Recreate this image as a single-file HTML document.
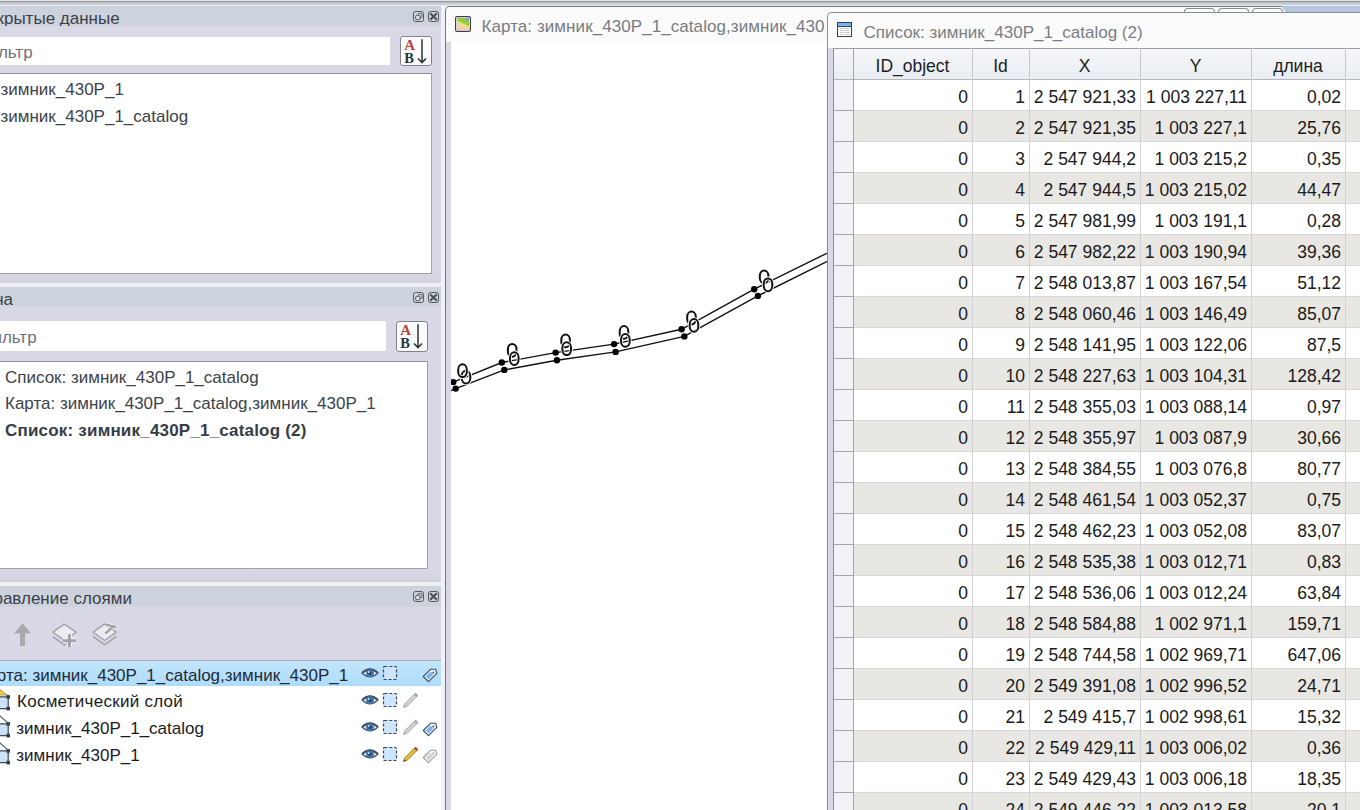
<!DOCTYPE html>
<html><head><meta charset="utf-8"><style>
html,body{margin:0;padding:0}
body{width:1360px;height:810px;overflow:hidden;position:relative;background:#fff;font-family:"Liberation Sans",sans-serif}
.a{position:absolute;box-sizing:border-box}
.t{position:absolute;white-space:pre;line-height:1;font-family:"Liberation Sans",sans-serif}
svg.a{overflow:visible}
</style></head><body>
<div class="a" style="left:0px;top:0px;width:1360px;height:7px;background:linear-gradient(#e2e4e8 0px,#e2e4e8 1px,#8e9298 1px,#9a9ea4 2px,#b6bac0 2px,#d4d8de 5px,#e4e7ec 5px,#e4e7ec 7px)"></div>
<div class="a" style="left:0px;top:6px;width:441px;height:20px;background:linear-gradient(#cdd3dc 0,#cdd3dc 18px,#d3d5e0 20px)"></div>
<div class="t" style="left:-24.5px;top:9.61px;font-size:17px;color:#3b4049;font-weight:400;">Открытые данные</div>
<svg class="a" style="left:413px;top:11px" width="11" height="11" viewBox="0 0 11 11"><rect x="0.5" y="0.5" width="10" height="10" rx="2" fill="none" stroke="#55595f"/><rect x="5.3" y="2.4" width="3.6" height="4.2" rx="1" fill="none" stroke="#55595f" stroke-width="1"/><rect x="2.6" y="4.3" width="4.4" height="4.4" rx="1.3" fill="#d6dbe2" stroke="#55595f" stroke-width="1"/></svg>
<svg class="a" style="left:428px;top:11px" width="11" height="11" viewBox="0 0 11 11"><rect x="0.5" y="0.5" width="10" height="10" rx="2" fill="none" stroke="#55595f"/><path d="M2.9 2.9 L8.1 8.1 M8.1 2.9 L2.9 8.1" stroke="#4e5258" stroke-width="2.1" stroke-linecap="square"/></svg>
<div class="a" style="left:0px;top:26px;width:441px;height:257px;background:linear-gradient(#d9d8e6 0,#d9d8e6 245px,#d4d4e1 257px)"></div>
<div class="a" style="left:0px;top:37px;width:390px;height:28px;background:#fff"></div>
<div class="t" style="left:-24.5px;top:44.41px;font-size:17px;color:#6f7378;font-weight:400;">Фильтр</div>
<svg class="a" style="left:400px;top:36px" width="32" height="30" viewBox="0 0 32 30"><rect x="0.5" y="0.5" width="31" height="29" rx="2.5" fill="#fbfbfd" stroke="#7f838a"/><text x="4.2" y="14" font-family="Liberation Serif" font-weight="700" font-size="15" fill="#b8443a">A</text><text x="4.2" y="26.6" font-family="Liberation Serif" font-weight="700" font-size="14.5" fill="#1f3838">B</text><path d="M22 3.3 V26.5 M18 22.5 L22 26.6 L26 22.5" fill="none" stroke="#2a3236" stroke-width="1.5"/></svg>
<div class="a" style="left:-2px;top:73px;width:434px;height:201px;background:#fff;border-top:1px solid #8d9096;border-right:1px solid #a0a3aa;border-bottom:1px solid #a0a3aa"></div>
<div class="t" style="left:0.5px;top:80.61px;font-size:17px;color:#3c424b;font-weight:400;">зимник_430P_1</div>
<div class="t" style="left:0.5px;top:108.11px;font-size:17px;color:#3c424b;font-weight:400;">зимник_430P_1_catalog</div>
<div class="a" style="left:0px;top:283px;width:441px;height:4px;background:#eef0f6"></div>
<div class="a" style="left:0px;top:287px;width:441px;height:20px;background:linear-gradient(#cdd3dc 0,#cdd3dc 18px,#d3d5e0 20px)"></div>
<div class="t" style="left:-26.5px;top:290.61px;font-size:17px;color:#3b4049;font-weight:400;">Окна</div>
<svg class="a" style="left:413px;top:292px" width="11" height="11" viewBox="0 0 11 11"><rect x="0.5" y="0.5" width="10" height="10" rx="2" fill="none" stroke="#55595f"/><rect x="5.3" y="2.4" width="3.6" height="4.2" rx="1" fill="none" stroke="#55595f" stroke-width="1"/><rect x="2.6" y="4.3" width="4.4" height="4.4" rx="1.3" fill="#d6dbe2" stroke="#55595f" stroke-width="1"/></svg>
<svg class="a" style="left:428px;top:292px" width="11" height="11" viewBox="0 0 11 11"><rect x="0.5" y="0.5" width="10" height="10" rx="2" fill="none" stroke="#55595f"/><path d="M2.9 2.9 L8.1 8.1 M8.1 2.9 L2.9 8.1" stroke="#4e5258" stroke-width="2.1" stroke-linecap="square"/></svg>
<div class="a" style="left:0px;top:307px;width:441px;height:275px;background:linear-gradient(#d9d8e6 0,#d9d8e6 261px,#d3d3e0 275px)"></div>
<div class="a" style="left:0px;top:321px;width:386px;height:29.5px;background:#fff"></div>
<div class="t" style="left:-20.5px;top:329.21px;font-size:17px;color:#6f7378;font-weight:400;">Фильтр</div>
<svg class="a" style="left:396px;top:321px" width="32" height="31" viewBox="0 0 32 31"><rect x="0.5" y="0.5" width="31" height="30" rx="2.5" fill="#fbfbfd" stroke="#7f838a"/><text x="4.2" y="14" font-family="Liberation Serif" font-weight="700" font-size="15" fill="#b8443a">A</text><text x="4.2" y="26.6" font-family="Liberation Serif" font-weight="700" font-size="14.5" fill="#1f3838">B</text><path d="M22 3.3 V26.5 M18 22.5 L22 26.6 L26 22.5" fill="none" stroke="#2a3236" stroke-width="1.5"/></svg>
<div class="a" style="left:-2px;top:361px;width:430px;height:208px;background:#fff;border-top:1px solid #8d9096;border-right:1px solid #a0a3aa;border-bottom:1px solid #a0a3aa"></div>
<div class="t" style="left:5px;top:368.61px;font-size:17px;color:#3c424b;font-weight:400;">Список: зимник_430P_1_catalog</div>
<div class="t" style="left:5px;top:395.11px;font-size:17px;color:#3c424b;font-weight:400;">Карта: зимник_430P_1_catalog,зимник_430P_1</div>
<div class="t" style="left:5px;top:422.11px;font-size:17px;color:#363c45;font-weight:700;letter-spacing:0.2px">Список: зимник_430P_1_catalog (2)</div>
<div class="a" style="left:0px;top:582px;width:441px;height:4px;background:#eef0f6"></div>
<div class="a" style="left:0px;top:586px;width:441px;height:21px;background:linear-gradient(#cdd3dc 0,#cdd3dc 19px,#d3d5e0 21px)"></div>
<div class="t" style="left:-25.8px;top:589.61px;font-size:17px;color:#3b4049;font-weight:400;">Управление слоями</div>
<svg class="a" style="left:413px;top:591px" width="11" height="11" viewBox="0 0 11 11"><rect x="0.5" y="0.5" width="10" height="10" rx="2" fill="none" stroke="#55595f"/><rect x="5.3" y="2.4" width="3.6" height="4.2" rx="1" fill="none" stroke="#55595f" stroke-width="1"/><rect x="2.6" y="4.3" width="4.4" height="4.4" rx="1.3" fill="#d6dbe2" stroke="#55595f" stroke-width="1"/></svg>
<svg class="a" style="left:428px;top:591px" width="11" height="11" viewBox="0 0 11 11"><rect x="0.5" y="0.5" width="10" height="10" rx="2" fill="none" stroke="#55595f"/><path d="M2.9 2.9 L8.1 8.1 M8.1 2.9 L2.9 8.1" stroke="#4e5258" stroke-width="2.1" stroke-linecap="square"/></svg>
<div class="a" style="left:0px;top:607px;width:441px;height:53px;background:#d9d8e6"></div>
<svg class="a" style="left:10px;top:618px" width="120" height="34" viewBox="0 0 120 34"><path d="M12.5 5.3 L4 15.5 L10 15.5 L10 28 L15 28 L15 15.5 L21 15.5 Z" fill="#a9a9b1"/><path d="M54.3 6.1 L66.3 14.2 L54.5 22.5 L42.8 14.2 Z" fill="#ececf0" stroke="#a2a2aa" stroke-width="1.5" stroke-linejoin="round"/><path d="M42.8 18.6 L54.5 27 L58 24.5" fill="none" stroke="#a2a2aa" stroke-width="1.5"/><path d="M59.4 16.2 V29.2 M52.9 22.7 H65.9" stroke="#f4f4f8" stroke-width="5.2"/><path d="M59.4 16.2 V29.2 M52.9 22.7 H65.9" stroke="#a2a2aa" stroke-width="3"/><path d="M94.4 6.1 L106.2 14.2 L94.6 22.5 L83 14.2 Z" fill="#ececf0" stroke="#a2a2aa" stroke-width="1.5" stroke-linejoin="round"/><path d="M83 18.4 L94.6 26.8 L106.6 18.4" fill="none" stroke="#a2a2aa" stroke-width="1.5"/><path d="M95.3 15.5 L104.7 7.4 M96 6.3 L105.8 9.3" stroke="#f4f4f8" stroke-width="4"/><path d="M95.3 15.5 L104.7 7.4 M96 6.3 L105.8 9.3" stroke="#a2a2aa" stroke-width="2.4"/></svg>
<div class="a" style="left:0px;top:660px;width:441px;height:150px;background:#fff;border-top:1px solid #a3a8b2"></div>
<div class="a" style="left:0px;top:661px;width:441px;height:25px;background:linear-gradient(#c2e5fc,#aedcfb)"></div>
<div class="t" style="left:-22.5px;top:666.61px;font-size:17px;color:#1d2a36;font-weight:400;">Карта: зимник_430P_1_catalog,зимник_430P_1</div>
<svg class="a" style="left:360px;top:665px" width="20" height="16" viewBox="0 0 20 16"><path d="M2 8 Q10 0.5 18 8 Q10 15.5 2 8 Z" fill="#eef4fa" stroke="#4b5764" stroke-width="1.3"/><path d="M2.5 7.6 Q10 1.2 17.5 7.6" fill="none" stroke="#46525e" stroke-width="2"/><circle cx="10" cy="8.2" r="3.9" fill="#3f74ae"/><circle cx="10" cy="8.2" r="1.6" fill="#23466e"/><circle cx="8.8" cy="7" r="0.9" fill="#d8e6f4"/></svg>
<svg class="a" style="left:382px;top:665px" width="16" height="16" viewBox="0 0 16 16"><rect x="1.5" y="1.5" width="13" height="13" rx="1" fill="#cfe5fb" stroke="#34495f" stroke-width="1.2" stroke-dasharray="3 1.8"/></svg>
<svg class="a" style="left:421px;top:665px" width="18" height="17" viewBox="0 0 18 17"><path d="M2.3 11.5 L9.5 4.3 L14.7 4.3 L15.8 8.4 L7.5 16.7 Z" fill="#fafcff" stroke="#354a60" stroke-width="1.1" stroke-linejoin="round"/><path d="M4.6 11.4 L9.5 6.5 L12.5 9.5 L7.6 14.4 Z" fill="#7fb4ea"/><circle cx="12.4" cy="7.4" r="1" fill="#354a60"/></svg>
<div class="t" style="left:17px;top:692.61px;font-size:17px;color:#1b1b1b;font-weight:400;letter-spacing:0.27px">Косметический слой</div>
<svg class="a" style="left:360px;top:692px" width="20" height="16" viewBox="0 0 20 16"><path d="M2 8 Q10 0.5 18 8 Q10 15.5 2 8 Z" fill="#eef4fa" stroke="#4b5764" stroke-width="1.3"/><path d="M2.5 7.6 Q10 1.2 17.5 7.6" fill="none" stroke="#46525e" stroke-width="2"/><circle cx="10" cy="8.2" r="3.9" fill="#3f74ae"/><circle cx="10" cy="8.2" r="1.6" fill="#23466e"/><circle cx="8.8" cy="7" r="0.9" fill="#d8e6f4"/></svg>
<svg class="a" style="left:382px;top:692px" width="16" height="16" viewBox="0 0 16 16"><rect x="1.5" y="1.5" width="13" height="13" rx="1" fill="#cfe5fb" stroke="#34495f" stroke-width="1.2" stroke-dasharray="3 1.8"/></svg>
<svg class="a" style="left:402px;top:692px" width="17" height="17" viewBox="0 0 17 17"><path d="M1.5 15.5 L2.8 11.8 L12.3 2.3 L14.7 4.7 L5.2 14.2 Z" fill="#d0d2d6" stroke="#9c9fa4" stroke-width="0.9" stroke-linejoin="round"/><path d="M12.3 2.3 L13.6 1 L16 3.4 L14.7 4.7 Z" fill="#a4a7ac" stroke="#9c9fa4" stroke-width="0.6"/></svg>
<svg class="a" style="left:0px;top:687px" width="12" height="24" viewBox="0 0 12 24"><path d="M-1 1.8 L7.5 8.1 L-1 8.1 Z" fill="#f0c640" stroke="#8a7a40" stroke-width="0.6"/><path d="M-1 9.9 L8.2 9.9 L8.2 21.6 L-1 21.6 Z" fill="#cde2f8" stroke="#3c4956" stroke-width="1.2"/><rect x="6.4" y="8.1" width="3.6" height="3.6" fill="#36414c"/><rect x="6.4" y="19.8" width="3.6" height="3.6" fill="#36414c"/></svg>
<div class="t" style="left:16.3px;top:719.81px;font-size:17px;color:#1b1b1b;font-weight:400;">зимник_430P_1_catalog</div>
<svg class="a" style="left:360px;top:719px" width="20" height="16" viewBox="0 0 20 16"><path d="M2 8 Q10 0.5 18 8 Q10 15.5 2 8 Z" fill="#eef4fa" stroke="#4b5764" stroke-width="1.3"/><path d="M2.5 7.6 Q10 1.2 17.5 7.6" fill="none" stroke="#46525e" stroke-width="2"/><circle cx="10" cy="8.2" r="3.9" fill="#3f74ae"/><circle cx="10" cy="8.2" r="1.6" fill="#23466e"/><circle cx="8.8" cy="7" r="0.9" fill="#d8e6f4"/></svg>
<svg class="a" style="left:382px;top:719px" width="16" height="16" viewBox="0 0 16 16"><rect x="1.5" y="1.5" width="13" height="13" rx="1" fill="#cfe5fb" stroke="#34495f" stroke-width="1.2" stroke-dasharray="3 1.8"/></svg>
<svg class="a" style="left:402px;top:719px" width="17" height="17" viewBox="0 0 17 17"><path d="M1.5 15.5 L2.8 11.8 L12.3 2.3 L14.7 4.7 L5.2 14.2 Z" fill="#d0d2d6" stroke="#9c9fa4" stroke-width="0.9" stroke-linejoin="round"/><path d="M12.3 2.3 L13.6 1 L16 3.4 L14.7 4.7 Z" fill="#a4a7ac" stroke="#9c9fa4" stroke-width="0.6"/></svg>
<svg class="a" style="left:421px;top:719px" width="18" height="17" viewBox="0 0 18 17"><path d="M2.3 11.5 L9.5 4.3 L14.7 4.3 L15.8 8.4 L7.5 16.7 Z" fill="#fafcff" stroke="#354a60" stroke-width="1.1" stroke-linejoin="round"/><path d="M4.6 11.4 L9.5 6.5 L12.5 9.5 L7.6 14.4 Z" fill="#7fb4ea"/><circle cx="12.4" cy="7.4" r="1" fill="#354a60"/></svg>
<svg class="a" style="left:0px;top:714px" width="12" height="24" viewBox="0 0 12 24"><path d="M-1 1.2 L7.5 8.7" fill="none" stroke="#46535f" stroke-width="1.1"/><path d="M-1 9.9 L8.2 9.9 L8.2 21.6 L-1 21.6 Z" fill="#cde2f8" stroke="#3c4956" stroke-width="1.2"/><rect x="6.4" y="8.1" width="3.6" height="3.6" fill="#36414c"/><rect x="6.4" y="19.8" width="3.6" height="3.6" fill="#36414c"/></svg>
<div class="t" style="left:16.3px;top:746.61px;font-size:17px;color:#1b1b1b;font-weight:400;">зимник_430P_1</div>
<svg class="a" style="left:360px;top:746px" width="20" height="16" viewBox="0 0 20 16"><path d="M2 8 Q10 0.5 18 8 Q10 15.5 2 8 Z" fill="#eef4fa" stroke="#4b5764" stroke-width="1.3"/><path d="M2.5 7.6 Q10 1.2 17.5 7.6" fill="none" stroke="#46525e" stroke-width="2"/><circle cx="10" cy="8.2" r="3.9" fill="#3f74ae"/><circle cx="10" cy="8.2" r="1.6" fill="#23466e"/><circle cx="8.8" cy="7" r="0.9" fill="#d8e6f4"/></svg>
<svg class="a" style="left:382px;top:746px" width="16" height="16" viewBox="0 0 16 16"><rect x="1.5" y="1.5" width="13" height="13" rx="1" fill="#cfe5fb" stroke="#34495f" stroke-width="1.2" stroke-dasharray="3 1.8"/></svg>
<svg class="a" style="left:402px;top:746px" width="17" height="17" viewBox="0 0 17 17"><path d="M1.5 15.5 L2.8 11.8 L12.3 2.3 L14.7 4.7 L5.2 14.2 Z" fill="#e8c030" stroke="#8a7420" stroke-width="0.9" stroke-linejoin="round"/><path d="M1.5 15.5 L2.2 13.4 L3.6 14.8 Z" fill="#3a3020"/><path d="M12.3 2.3 L13.6 1 L16 3.4 L14.7 4.7 Z" fill="#b8502c" stroke="#8a3a20" stroke-width="0.6"/></svg>
<svg class="a" style="left:421px;top:746px" width="18" height="17" viewBox="0 0 18 17"><path d="M2.3 11.5 L9.5 4.3 L14.7 4.3 L15.8 8.4 L7.5 16.7 Z" fill="#fafcff" stroke="#9a9da3" stroke-width="1.1" stroke-linejoin="round"/><path d="M4.6 11.4 L9.5 6.5 L12.5 9.5 L7.6 14.4 Z" fill="#cfd1d5"/><circle cx="12.4" cy="7.4" r="1" fill="#9a9da3"/></svg>
<svg class="a" style="left:0px;top:741px" width="12" height="24" viewBox="0 0 12 24"><path d="M-1 1.2 L7.5 8.7" fill="none" stroke="#46535f" stroke-width="1.1"/><path d="M-1 9.9 L8.2 9.9 L8.2 21.6 L-1 21.6 Z" fill="#cde2f8" stroke="#3c4956" stroke-width="1.2"/><rect x="6.4" y="8.1" width="3.6" height="3.6" fill="#36414c"/><rect x="6.4" y="19.8" width="3.6" height="3.6" fill="#36414c"/></svg>
<div class="a" style="left:441px;top:6px;width:4px;height:804px;background:#eff1f7"></div>
<div class="a" style="left:445px;top:6px;width:1000px;height:900px;background:#fbfbfb;border-left:1px solid #73767e;border-top:1px solid #6f7279;border-top-left-radius:5px"></div>
<svg class="a" style="left:455px;top:16px" width="16" height="16" viewBox="0 0 16 16"><rect x="0.6" y="0.6" width="14.8" height="14.8" rx="1.6" fill="#fff" stroke="#3a3f46" stroke-width="1.2"/><rect x="2.2" y="2.2" width="11.6" height="11.6" fill="#f2d4a4"/><path d="M2 9 L7.5 14 L2 14 Z" fill="#f0c4bc"/><path d="M8 14 L14 11 L14 14 Z" fill="#f2c8c4"/><path d="M2 2 L9.5 2 L14 5.5 L14 10.5 L2 4.8 Z" fill="#92c83c"/><path d="M2 5.6 L14 11.2" stroke="#e2ec70" stroke-width="1.6"/><path d="M2 3.2 L12 8.2" stroke="#b8dc50" stroke-width="1"/><path d="M9.5 2 L14 2 L14 5.5 Z" fill="#7c98e4"/></svg>
<div class="a" style="left:470px;top:10px;width:356px;height:30px;overflow:hidden"><div class="t" style="left:11.5px;top:7.61px;font-size:17px;color:#787c82;font-weight:400;letter-spacing:0.07px">Карта: зимник_430P_1_catalog,зимник_430P_1</div></div>
<div class="a" style="left:446px;top:42px;width:5px;height:768px;background:#d8d8e5"></div>
<div class="a" style="left:451px;top:42px;width:900px;height:768px;background:#fff"></div>
<div class="a" style="left:1184px;top:8px;width:31px;height:6px;background:#fdfdfd;border:1px solid #8a8d94;border-bottom:none;border-radius:4px 4px 0 0"></div>
<div class="a" style="left:1218px;top:8px;width:31px;height:6px;background:#fdfdfd;border:1px solid #8a8d94;border-bottom:none;border-radius:4px 4px 0 0"></div>
<div class="a" style="left:1252px;top:8px;width:31px;height:6px;background:#fdfdfd;border:1px solid #8a8d94;border-bottom:none;border-radius:4px 4px 0 0"></div>
<div class="a" style="left:1281px;top:6px;width:79px;height:6.5px;background:#b6c6de;clip-path:polygon(0 0,100% 0,100% 100%,5px 100%)"></div>
<svg class="a" style="left:0;top:0" width="1360" height="810" viewBox="0 0 1360 810"><defs><clipPath id="mc"><rect x="451" y="42" width="376" height="768"/></clipPath></defs><g clip-path="url(#mc)" fill="none" stroke="#111" stroke-width="1.4"><polyline points="440,387 453.3,382.1 501.8,362.5 555.6,352.6 614.1,344.1 681.6,329.3 754.2,289.2 830,251.7"/><polyline points="440,394.6 455.7,388.6 504.3,369.9 556.9,360.2 615.6,351.9 684.3,336.4 757.9,295.9 830,260.1"/><rect x="461.7" y="370.70000000000005" width="8.6" height="12.8" rx="4.3" ry="5.4" stroke="#fff" stroke-width="3.7"/><rect x="461.7" y="370.70000000000005" width="8.6" height="12.8" rx="4.3" ry="5.4" stroke-width="2.0"/><rect x="458.2" y="364.3" width="8.6" height="12.8" rx="4.3" ry="5.4" stroke="#fff" stroke-width="3.7"/><rect x="458.2" y="364.3" width="8.6" height="12.8" rx="4.3" ry="5.4" stroke-width="2.0"/><rect x="507.90000000000003" y="343.90000000000003" width="8.6" height="12.8" rx="4.3" ry="5.4" stroke="#fff" stroke-width="3.7"/><rect x="507.90000000000003" y="343.90000000000003" width="8.6" height="12.8" rx="4.3" ry="5.4" stroke-width="2.0"/><rect x="509.99999999999994" y="352.20000000000005" width="8.6" height="12.8" rx="4.3" ry="5.4" stroke="#fff" stroke-width="3.7"/><rect x="509.99999999999994" y="352.20000000000005" width="8.6" height="12.8" rx="4.3" ry="5.4" stroke-width="2.0"/><rect x="561.3000000000001" y="334.5" width="8.6" height="12.8" rx="4.3" ry="5.4" stroke="#fff" stroke-width="3.7"/><rect x="561.3000000000001" y="334.5" width="8.6" height="12.8" rx="4.3" ry="5.4" stroke-width="2.0"/><rect x="562.4000000000001" y="342.3" width="8.6" height="12.8" rx="4.3" ry="5.4" stroke="#fff" stroke-width="3.7"/><rect x="562.4000000000001" y="342.3" width="8.6" height="12.8" rx="4.3" ry="5.4" stroke-width="2.0"/><rect x="619.7" y="326.0" width="8.6" height="12.8" rx="4.3" ry="5.4" stroke="#fff" stroke-width="3.7"/><rect x="619.7" y="326.0" width="8.6" height="12.8" rx="4.3" ry="5.4" stroke-width="2.0"/><rect x="621.1" y="334.0" width="8.6" height="12.8" rx="4.3" ry="5.4" stroke="#fff" stroke-width="3.7"/><rect x="621.1" y="334.0" width="8.6" height="12.8" rx="4.3" ry="5.4" stroke-width="2.0"/><rect x="687.2" y="311.6" width="8.6" height="12.8" rx="4.3" ry="5.4" stroke="#fff" stroke-width="3.7"/><rect x="687.2" y="311.6" width="8.6" height="12.8" rx="4.3" ry="5.4" stroke-width="2.0"/><rect x="689.7" y="319.0" width="8.6" height="12.8" rx="4.3" ry="5.4" stroke="#fff" stroke-width="3.7"/><rect x="689.7" y="319.0" width="8.6" height="12.8" rx="4.3" ry="5.4" stroke-width="2.0"/><rect x="759.8000000000001" y="270.5" width="8.6" height="12.8" rx="4.3" ry="5.4" stroke="#fff" stroke-width="3.7"/><rect x="759.8000000000001" y="270.5" width="8.6" height="12.8" rx="4.3" ry="5.4" stroke-width="2.0"/><rect x="763.7" y="278.40000000000003" width="8.6" height="12.8" rx="4.3" ry="5.4" stroke="#fff" stroke-width="3.7"/><rect x="763.7" y="278.40000000000003" width="8.6" height="12.8" rx="4.3" ry="5.4" stroke-width="2.0"/></g><g clip-path="url(#mc)" fill="#000"><circle cx="453.3" cy="382.1" r="3.2"/><circle cx="501.8" cy="362.5" r="3.2"/><circle cx="555.6" cy="352.6" r="3.2"/><circle cx="614.1" cy="344.1" r="3.2"/><circle cx="681.6" cy="329.3" r="3.2"/><circle cx="754.2" cy="289.2" r="3.2"/><circle cx="455.7" cy="388.6" r="3.2"/><circle cx="504.3" cy="369.9" r="3.2"/><circle cx="556.9" cy="360.2" r="3.2"/><circle cx="615.6" cy="351.9" r="3.2"/><circle cx="684.3" cy="336.4" r="3.2"/><circle cx="757.9" cy="295.9" r="3.2"/></g></svg>
<div class="a" style="left:827px;top:12px;width:600px;height:900px;background:#fbfbfb;border-left:1px solid #8b8e95;border-top:1px solid #8b8e95;border-top-left-radius:5px"></div>
<svg class="a" style="left:837px;top:22px" width="15" height="15" viewBox="0 0 15 15"><rect x="0.5" y="0.5" width="14" height="14" fill="#fff" stroke="#3a3f48" stroke-width="1"/><rect x="1" y="1" width="13" height="3.5" fill="#74b2ef"/><path d="M1 4.5 H14" stroke="#30495f" stroke-width="1"/><path d="M3 6.5 H6.5 M7.5 6.5 H12.5 M3 8.5 H6.5 M7.5 8.5 H12.5 M3 10.5 H6.5 M7.5 10.5 H12.5 M3 12.5 H6.5 M7.5 12.5 H12.5" stroke="#b9c0c8" stroke-width="0.9"/></svg>
<div class="t" style="left:863.5px;top:23.91px;font-size:17px;color:#7a7e84;font-weight:400;">Список: зимник_430P_1_catalog (2)</div>
<div class="a" style="left:828px;top:48px;width:5px;height:770px;background:#d8d8e5"></div>
<div class="a" style="left:833px;top:48px;width:600px;height:770px;background:#fff"></div><div class="a" style="left:833px;top:48px;width:600px;height:31px;background:linear-gradient(#f6f7fa,#e9edf2)"></div><div class="a" style="left:833px;top:79px;width:20px;height:31px;background:#f1f3f6"></div><div class="a" style="left:853px;top:110px;width:600px;height:31px;background:#e8e7e3"></div><div class="a" style="left:833px;top:110px;width:20px;height:31px;background:#f1f3f6"></div><div class="a" style="left:833px;top:141px;width:20px;height:31px;background:#f1f3f6"></div><div class="a" style="left:853px;top:172px;width:600px;height:31px;background:#e8e7e3"></div><div class="a" style="left:833px;top:172px;width:20px;height:31px;background:#f1f3f6"></div><div class="a" style="left:833px;top:203px;width:20px;height:31px;background:#f1f3f6"></div><div class="a" style="left:853px;top:234px;width:600px;height:31px;background:#e8e7e3"></div><div class="a" style="left:833px;top:234px;width:20px;height:31px;background:#f1f3f6"></div><div class="a" style="left:833px;top:265px;width:20px;height:31px;background:#f1f3f6"></div><div class="a" style="left:853px;top:296px;width:600px;height:31px;background:#e8e7e3"></div><div class="a" style="left:833px;top:296px;width:20px;height:31px;background:#f1f3f6"></div><div class="a" style="left:833px;top:327px;width:20px;height:31px;background:#f1f3f6"></div><div class="a" style="left:853px;top:358px;width:600px;height:31px;background:#e8e7e3"></div><div class="a" style="left:833px;top:358px;width:20px;height:31px;background:#f1f3f6"></div><div class="a" style="left:833px;top:389px;width:20px;height:31px;background:#f1f3f6"></div><div class="a" style="left:853px;top:420px;width:600px;height:31px;background:#e8e7e3"></div><div class="a" style="left:833px;top:420px;width:20px;height:31px;background:#f1f3f6"></div><div class="a" style="left:833px;top:451px;width:20px;height:31px;background:#f1f3f6"></div><div class="a" style="left:853px;top:482px;width:600px;height:31px;background:#e8e7e3"></div><div class="a" style="left:833px;top:482px;width:20px;height:31px;background:#f1f3f6"></div><div class="a" style="left:833px;top:513px;width:20px;height:31px;background:#f1f3f6"></div><div class="a" style="left:853px;top:544px;width:600px;height:31px;background:#e8e7e3"></div><div class="a" style="left:833px;top:544px;width:20px;height:31px;background:#f1f3f6"></div><div class="a" style="left:833px;top:575px;width:20px;height:31px;background:#f1f3f6"></div><div class="a" style="left:853px;top:606px;width:600px;height:31px;background:#e8e7e3"></div><div class="a" style="left:833px;top:606px;width:20px;height:31px;background:#f1f3f6"></div><div class="a" style="left:833px;top:637px;width:20px;height:31px;background:#f1f3f6"></div><div class="a" style="left:853px;top:668px;width:600px;height:31px;background:#e8e7e3"></div><div class="a" style="left:833px;top:668px;width:20px;height:31px;background:#f1f3f6"></div><div class="a" style="left:833px;top:699px;width:20px;height:31px;background:#f1f3f6"></div><div class="a" style="left:853px;top:730px;width:600px;height:31px;background:#e8e7e3"></div><div class="a" style="left:833px;top:730px;width:20px;height:31px;background:#f1f3f6"></div><div class="a" style="left:833px;top:761px;width:20px;height:31px;background:#f1f3f6"></div><div class="a" style="left:853px;top:792px;width:600px;height:31px;background:#e8e7e3"></div><div class="a" style="left:833px;top:792px;width:20px;height:31px;background:#f1f3f6"></div><div class="a" style="left:853px;top:79px;width:600px;height:1px;background:#d6d7d9"></div><div class="a" style="left:833px;top:79px;width:20px;height:1px;background:#a3a7ad"></div><div class="a" style="left:853px;top:110px;width:600px;height:1px;background:#d6d7d9"></div><div class="a" style="left:833px;top:110px;width:20px;height:1px;background:#a3a7ad"></div><div class="a" style="left:853px;top:141px;width:600px;height:1px;background:#d6d7d9"></div><div class="a" style="left:833px;top:141px;width:20px;height:1px;background:#a3a7ad"></div><div class="a" style="left:853px;top:172px;width:600px;height:1px;background:#d6d7d9"></div><div class="a" style="left:833px;top:172px;width:20px;height:1px;background:#a3a7ad"></div><div class="a" style="left:853px;top:203px;width:600px;height:1px;background:#d6d7d9"></div><div class="a" style="left:833px;top:203px;width:20px;height:1px;background:#a3a7ad"></div><div class="a" style="left:853px;top:234px;width:600px;height:1px;background:#d6d7d9"></div><div class="a" style="left:833px;top:234px;width:20px;height:1px;background:#a3a7ad"></div><div class="a" style="left:853px;top:265px;width:600px;height:1px;background:#d6d7d9"></div><div class="a" style="left:833px;top:265px;width:20px;height:1px;background:#a3a7ad"></div><div class="a" style="left:853px;top:296px;width:600px;height:1px;background:#d6d7d9"></div><div class="a" style="left:833px;top:296px;width:20px;height:1px;background:#a3a7ad"></div><div class="a" style="left:853px;top:327px;width:600px;height:1px;background:#d6d7d9"></div><div class="a" style="left:833px;top:327px;width:20px;height:1px;background:#a3a7ad"></div><div class="a" style="left:853px;top:358px;width:600px;height:1px;background:#d6d7d9"></div><div class="a" style="left:833px;top:358px;width:20px;height:1px;background:#a3a7ad"></div><div class="a" style="left:853px;top:389px;width:600px;height:1px;background:#d6d7d9"></div><div class="a" style="left:833px;top:389px;width:20px;height:1px;background:#a3a7ad"></div><div class="a" style="left:853px;top:420px;width:600px;height:1px;background:#d6d7d9"></div><div class="a" style="left:833px;top:420px;width:20px;height:1px;background:#a3a7ad"></div><div class="a" style="left:853px;top:451px;width:600px;height:1px;background:#d6d7d9"></div><div class="a" style="left:833px;top:451px;width:20px;height:1px;background:#a3a7ad"></div><div class="a" style="left:853px;top:482px;width:600px;height:1px;background:#d6d7d9"></div><div class="a" style="left:833px;top:482px;width:20px;height:1px;background:#a3a7ad"></div><div class="a" style="left:853px;top:513px;width:600px;height:1px;background:#d6d7d9"></div><div class="a" style="left:833px;top:513px;width:20px;height:1px;background:#a3a7ad"></div><div class="a" style="left:853px;top:544px;width:600px;height:1px;background:#d6d7d9"></div><div class="a" style="left:833px;top:544px;width:20px;height:1px;background:#a3a7ad"></div><div class="a" style="left:853px;top:575px;width:600px;height:1px;background:#d6d7d9"></div><div class="a" style="left:833px;top:575px;width:20px;height:1px;background:#a3a7ad"></div><div class="a" style="left:853px;top:606px;width:600px;height:1px;background:#d6d7d9"></div><div class="a" style="left:833px;top:606px;width:20px;height:1px;background:#a3a7ad"></div><div class="a" style="left:853px;top:637px;width:600px;height:1px;background:#d6d7d9"></div><div class="a" style="left:833px;top:637px;width:20px;height:1px;background:#a3a7ad"></div><div class="a" style="left:853px;top:668px;width:600px;height:1px;background:#d6d7d9"></div><div class="a" style="left:833px;top:668px;width:20px;height:1px;background:#a3a7ad"></div><div class="a" style="left:853px;top:699px;width:600px;height:1px;background:#d6d7d9"></div><div class="a" style="left:833px;top:699px;width:20px;height:1px;background:#a3a7ad"></div><div class="a" style="left:853px;top:730px;width:600px;height:1px;background:#d6d7d9"></div><div class="a" style="left:833px;top:730px;width:20px;height:1px;background:#a3a7ad"></div><div class="a" style="left:853px;top:761px;width:600px;height:1px;background:#d6d7d9"></div><div class="a" style="left:833px;top:761px;width:20px;height:1px;background:#a3a7ad"></div><div class="a" style="left:853px;top:792px;width:600px;height:1px;background:#d6d7d9"></div><div class="a" style="left:833px;top:792px;width:20px;height:1px;background:#a3a7ad"></div><div class="a" style="left:853px;top:823px;width:600px;height:1px;background:#d6d7d9"></div><div class="a" style="left:833px;top:823px;width:20px;height:1px;background:#a3a7ad"></div><div class="a" style="left:833px;top:48px;width:600px;height:1px;background:#9a9ea5"></div><div class="a" style="left:833px;top:79px;width:600px;height:1px;background:#b4b8be"></div><div class="a" style="left:833px;top:48px;width:1px;height:770px;background:#8c9097"></div><div class="a" style="left:853px;top:48px;width:1px;height:770px;background:#a3a7ad"></div><div class="a" style="left:972px;top:48px;width:1px;height:31px;background:#c4c8ce"></div><div class="a" style="left:972px;top:79px;width:1px;height:740px;background:#d0d2d6"></div><div class="a" style="left:1029px;top:48px;width:1px;height:31px;background:#c4c8ce"></div><div class="a" style="left:1029px;top:79px;width:1px;height:740px;background:#d0d2d6"></div><div class="a" style="left:1140px;top:48px;width:1px;height:31px;background:#c4c8ce"></div><div class="a" style="left:1140px;top:79px;width:1px;height:740px;background:#d0d2d6"></div><div class="a" style="left:1251px;top:48px;width:1px;height:31px;background:#c4c8ce"></div><div class="a" style="left:1251px;top:79px;width:1px;height:740px;background:#d0d2d6"></div><div class="a" style="left:1345px;top:48px;width:1px;height:31px;background:#c4c8ce"></div><div class="a" style="left:1345px;top:79px;width:1px;height:740px;background:#d0d2d6"></div><div class="t" style="left:853px;top:57.79px;width:119px;text-align:center;font-size:17.5px;color:#1e1e1e">ID_object</div><div class="t" style="left:972px;top:57.79px;width:57px;text-align:center;font-size:17.5px;color:#1e1e1e">Id</div><div class="t" style="left:1029px;top:57.79px;width:111px;text-align:center;font-size:17.5px;color:#1e1e1e">X</div><div class="t" style="left:1140px;top:57.79px;width:111px;text-align:center;font-size:17.5px;color:#1e1e1e">Y</div><div class="t" style="left:1251px;top:57.79px;width:94px;text-align:center;font-size:17.5px;color:#1e1e1e">длина</div><div class="t" style="left:853px;top:88.99px;width:115px;text-align:right;font-size:17.5px;color:#1a1a1a">0</div><div class="t" style="left:972px;top:88.99px;width:53px;text-align:right;font-size:17.5px;color:#1a1a1a">1</div><div class="t" style="left:1029px;top:88.99px;width:107px;text-align:right;font-size:17.5px;color:#1a1a1a">2 547 921,33</div><div class="t" style="left:1140px;top:88.99px;width:107px;text-align:right;font-size:17.5px;color:#1a1a1a">1 003 227,11</div><div class="t" style="left:1251px;top:88.99px;width:90px;text-align:right;font-size:17.5px;color:#1a1a1a">0,02</div><div class="t" style="left:853px;top:119.99px;width:115px;text-align:right;font-size:17.5px;color:#1a1a1a">0</div><div class="t" style="left:972px;top:119.99px;width:53px;text-align:right;font-size:17.5px;color:#1a1a1a">2</div><div class="t" style="left:1029px;top:119.99px;width:107px;text-align:right;font-size:17.5px;color:#1a1a1a">2 547 921,35</div><div class="t" style="left:1140px;top:119.99px;width:107px;text-align:right;font-size:17.5px;color:#1a1a1a">1 003 227,1</div><div class="t" style="left:1251px;top:119.99px;width:90px;text-align:right;font-size:17.5px;color:#1a1a1a">25,76</div><div class="t" style="left:853px;top:150.99px;width:115px;text-align:right;font-size:17.5px;color:#1a1a1a">0</div><div class="t" style="left:972px;top:150.99px;width:53px;text-align:right;font-size:17.5px;color:#1a1a1a">3</div><div class="t" style="left:1029px;top:150.99px;width:107px;text-align:right;font-size:17.5px;color:#1a1a1a">2 547 944,2</div><div class="t" style="left:1140px;top:150.99px;width:107px;text-align:right;font-size:17.5px;color:#1a1a1a">1 003 215,2</div><div class="t" style="left:1251px;top:150.99px;width:90px;text-align:right;font-size:17.5px;color:#1a1a1a">0,35</div><div class="t" style="left:853px;top:181.99px;width:115px;text-align:right;font-size:17.5px;color:#1a1a1a">0</div><div class="t" style="left:972px;top:181.99px;width:53px;text-align:right;font-size:17.5px;color:#1a1a1a">4</div><div class="t" style="left:1029px;top:181.99px;width:107px;text-align:right;font-size:17.5px;color:#1a1a1a">2 547 944,5</div><div class="t" style="left:1140px;top:181.99px;width:107px;text-align:right;font-size:17.5px;color:#1a1a1a">1 003 215,02</div><div class="t" style="left:1251px;top:181.99px;width:90px;text-align:right;font-size:17.5px;color:#1a1a1a">44,47</div><div class="t" style="left:853px;top:212.99px;width:115px;text-align:right;font-size:17.5px;color:#1a1a1a">0</div><div class="t" style="left:972px;top:212.99px;width:53px;text-align:right;font-size:17.5px;color:#1a1a1a">5</div><div class="t" style="left:1029px;top:212.99px;width:107px;text-align:right;font-size:17.5px;color:#1a1a1a">2 547 981,99</div><div class="t" style="left:1140px;top:212.99px;width:107px;text-align:right;font-size:17.5px;color:#1a1a1a">1 003 191,1</div><div class="t" style="left:1251px;top:212.99px;width:90px;text-align:right;font-size:17.5px;color:#1a1a1a">0,28</div><div class="t" style="left:853px;top:243.99px;width:115px;text-align:right;font-size:17.5px;color:#1a1a1a">0</div><div class="t" style="left:972px;top:243.99px;width:53px;text-align:right;font-size:17.5px;color:#1a1a1a">6</div><div class="t" style="left:1029px;top:243.99px;width:107px;text-align:right;font-size:17.5px;color:#1a1a1a">2 547 982,22</div><div class="t" style="left:1140px;top:243.99px;width:107px;text-align:right;font-size:17.5px;color:#1a1a1a">1 003 190,94</div><div class="t" style="left:1251px;top:243.99px;width:90px;text-align:right;font-size:17.5px;color:#1a1a1a">39,36</div><div class="t" style="left:853px;top:274.99px;width:115px;text-align:right;font-size:17.5px;color:#1a1a1a">0</div><div class="t" style="left:972px;top:274.99px;width:53px;text-align:right;font-size:17.5px;color:#1a1a1a">7</div><div class="t" style="left:1029px;top:274.99px;width:107px;text-align:right;font-size:17.5px;color:#1a1a1a">2 548 013,87</div><div class="t" style="left:1140px;top:274.99px;width:107px;text-align:right;font-size:17.5px;color:#1a1a1a">1 003 167,54</div><div class="t" style="left:1251px;top:274.99px;width:90px;text-align:right;font-size:17.5px;color:#1a1a1a">51,12</div><div class="t" style="left:853px;top:305.99px;width:115px;text-align:right;font-size:17.5px;color:#1a1a1a">0</div><div class="t" style="left:972px;top:305.99px;width:53px;text-align:right;font-size:17.5px;color:#1a1a1a">8</div><div class="t" style="left:1029px;top:305.99px;width:107px;text-align:right;font-size:17.5px;color:#1a1a1a">2 548 060,46</div><div class="t" style="left:1140px;top:305.99px;width:107px;text-align:right;font-size:17.5px;color:#1a1a1a">1 003 146,49</div><div class="t" style="left:1251px;top:305.99px;width:90px;text-align:right;font-size:17.5px;color:#1a1a1a">85,07</div><div class="t" style="left:853px;top:336.99px;width:115px;text-align:right;font-size:17.5px;color:#1a1a1a">0</div><div class="t" style="left:972px;top:336.99px;width:53px;text-align:right;font-size:17.5px;color:#1a1a1a">9</div><div class="t" style="left:1029px;top:336.99px;width:107px;text-align:right;font-size:17.5px;color:#1a1a1a">2 548 141,95</div><div class="t" style="left:1140px;top:336.99px;width:107px;text-align:right;font-size:17.5px;color:#1a1a1a">1 003 122,06</div><div class="t" style="left:1251px;top:336.99px;width:90px;text-align:right;font-size:17.5px;color:#1a1a1a">87,5</div><div class="t" style="left:853px;top:367.99px;width:115px;text-align:right;font-size:17.5px;color:#1a1a1a">0</div><div class="t" style="left:972px;top:367.99px;width:53px;text-align:right;font-size:17.5px;color:#1a1a1a">10</div><div class="t" style="left:1029px;top:367.99px;width:107px;text-align:right;font-size:17.5px;color:#1a1a1a">2 548 227,63</div><div class="t" style="left:1140px;top:367.99px;width:107px;text-align:right;font-size:17.5px;color:#1a1a1a">1 003 104,31</div><div class="t" style="left:1251px;top:367.99px;width:90px;text-align:right;font-size:17.5px;color:#1a1a1a">128,42</div><div class="t" style="left:853px;top:398.99px;width:115px;text-align:right;font-size:17.5px;color:#1a1a1a">0</div><div class="t" style="left:972px;top:398.99px;width:53px;text-align:right;font-size:17.5px;color:#1a1a1a">11</div><div class="t" style="left:1029px;top:398.99px;width:107px;text-align:right;font-size:17.5px;color:#1a1a1a">2 548 355,03</div><div class="t" style="left:1140px;top:398.99px;width:107px;text-align:right;font-size:17.5px;color:#1a1a1a">1 003 088,14</div><div class="t" style="left:1251px;top:398.99px;width:90px;text-align:right;font-size:17.5px;color:#1a1a1a">0,97</div><div class="t" style="left:853px;top:429.99px;width:115px;text-align:right;font-size:17.5px;color:#1a1a1a">0</div><div class="t" style="left:972px;top:429.99px;width:53px;text-align:right;font-size:17.5px;color:#1a1a1a">12</div><div class="t" style="left:1029px;top:429.99px;width:107px;text-align:right;font-size:17.5px;color:#1a1a1a">2 548 355,97</div><div class="t" style="left:1140px;top:429.99px;width:107px;text-align:right;font-size:17.5px;color:#1a1a1a">1 003 087,9</div><div class="t" style="left:1251px;top:429.99px;width:90px;text-align:right;font-size:17.5px;color:#1a1a1a">30,66</div><div class="t" style="left:853px;top:460.99px;width:115px;text-align:right;font-size:17.5px;color:#1a1a1a">0</div><div class="t" style="left:972px;top:460.99px;width:53px;text-align:right;font-size:17.5px;color:#1a1a1a">13</div><div class="t" style="left:1029px;top:460.99px;width:107px;text-align:right;font-size:17.5px;color:#1a1a1a">2 548 384,55</div><div class="t" style="left:1140px;top:460.99px;width:107px;text-align:right;font-size:17.5px;color:#1a1a1a">1 003 076,8</div><div class="t" style="left:1251px;top:460.99px;width:90px;text-align:right;font-size:17.5px;color:#1a1a1a">80,77</div><div class="t" style="left:853px;top:491.99px;width:115px;text-align:right;font-size:17.5px;color:#1a1a1a">0</div><div class="t" style="left:972px;top:491.99px;width:53px;text-align:right;font-size:17.5px;color:#1a1a1a">14</div><div class="t" style="left:1029px;top:491.99px;width:107px;text-align:right;font-size:17.5px;color:#1a1a1a">2 548 461,54</div><div class="t" style="left:1140px;top:491.99px;width:107px;text-align:right;font-size:17.5px;color:#1a1a1a">1 003 052,37</div><div class="t" style="left:1251px;top:491.99px;width:90px;text-align:right;font-size:17.5px;color:#1a1a1a">0,75</div><div class="t" style="left:853px;top:522.99px;width:115px;text-align:right;font-size:17.5px;color:#1a1a1a">0</div><div class="t" style="left:972px;top:522.99px;width:53px;text-align:right;font-size:17.5px;color:#1a1a1a">15</div><div class="t" style="left:1029px;top:522.99px;width:107px;text-align:right;font-size:17.5px;color:#1a1a1a">2 548 462,23</div><div class="t" style="left:1140px;top:522.99px;width:107px;text-align:right;font-size:17.5px;color:#1a1a1a">1 003 052,08</div><div class="t" style="left:1251px;top:522.99px;width:90px;text-align:right;font-size:17.5px;color:#1a1a1a">83,07</div><div class="t" style="left:853px;top:553.99px;width:115px;text-align:right;font-size:17.5px;color:#1a1a1a">0</div><div class="t" style="left:972px;top:553.99px;width:53px;text-align:right;font-size:17.5px;color:#1a1a1a">16</div><div class="t" style="left:1029px;top:553.99px;width:107px;text-align:right;font-size:17.5px;color:#1a1a1a">2 548 535,38</div><div class="t" style="left:1140px;top:553.99px;width:107px;text-align:right;font-size:17.5px;color:#1a1a1a">1 003 012,71</div><div class="t" style="left:1251px;top:553.99px;width:90px;text-align:right;font-size:17.5px;color:#1a1a1a">0,83</div><div class="t" style="left:853px;top:584.99px;width:115px;text-align:right;font-size:17.5px;color:#1a1a1a">0</div><div class="t" style="left:972px;top:584.99px;width:53px;text-align:right;font-size:17.5px;color:#1a1a1a">17</div><div class="t" style="left:1029px;top:584.99px;width:107px;text-align:right;font-size:17.5px;color:#1a1a1a">2 548 536,06</div><div class="t" style="left:1140px;top:584.99px;width:107px;text-align:right;font-size:17.5px;color:#1a1a1a">1 003 012,24</div><div class="t" style="left:1251px;top:584.99px;width:90px;text-align:right;font-size:17.5px;color:#1a1a1a">63,84</div><div class="t" style="left:853px;top:615.99px;width:115px;text-align:right;font-size:17.5px;color:#1a1a1a">0</div><div class="t" style="left:972px;top:615.99px;width:53px;text-align:right;font-size:17.5px;color:#1a1a1a">18</div><div class="t" style="left:1029px;top:615.99px;width:107px;text-align:right;font-size:17.5px;color:#1a1a1a">2 548 584,88</div><div class="t" style="left:1140px;top:615.99px;width:107px;text-align:right;font-size:17.5px;color:#1a1a1a">1 002 971,1</div><div class="t" style="left:1251px;top:615.99px;width:90px;text-align:right;font-size:17.5px;color:#1a1a1a">159,71</div><div class="t" style="left:853px;top:646.99px;width:115px;text-align:right;font-size:17.5px;color:#1a1a1a">0</div><div class="t" style="left:972px;top:646.99px;width:53px;text-align:right;font-size:17.5px;color:#1a1a1a">19</div><div class="t" style="left:1029px;top:646.99px;width:107px;text-align:right;font-size:17.5px;color:#1a1a1a">2 548 744,58</div><div class="t" style="left:1140px;top:646.99px;width:107px;text-align:right;font-size:17.5px;color:#1a1a1a">1 002 969,71</div><div class="t" style="left:1251px;top:646.99px;width:90px;text-align:right;font-size:17.5px;color:#1a1a1a">647,06</div><div class="t" style="left:853px;top:677.99px;width:115px;text-align:right;font-size:17.5px;color:#1a1a1a">0</div><div class="t" style="left:972px;top:677.99px;width:53px;text-align:right;font-size:17.5px;color:#1a1a1a">20</div><div class="t" style="left:1029px;top:677.99px;width:107px;text-align:right;font-size:17.5px;color:#1a1a1a">2 549 391,08</div><div class="t" style="left:1140px;top:677.99px;width:107px;text-align:right;font-size:17.5px;color:#1a1a1a">1 002 996,52</div><div class="t" style="left:1251px;top:677.99px;width:90px;text-align:right;font-size:17.5px;color:#1a1a1a">24,71</div><div class="t" style="left:853px;top:708.99px;width:115px;text-align:right;font-size:17.5px;color:#1a1a1a">0</div><div class="t" style="left:972px;top:708.99px;width:53px;text-align:right;font-size:17.5px;color:#1a1a1a">21</div><div class="t" style="left:1029px;top:708.99px;width:107px;text-align:right;font-size:17.5px;color:#1a1a1a">2 549 415,7</div><div class="t" style="left:1140px;top:708.99px;width:107px;text-align:right;font-size:17.5px;color:#1a1a1a">1 002 998,61</div><div class="t" style="left:1251px;top:708.99px;width:90px;text-align:right;font-size:17.5px;color:#1a1a1a">15,32</div><div class="t" style="left:853px;top:739.99px;width:115px;text-align:right;font-size:17.5px;color:#1a1a1a">0</div><div class="t" style="left:972px;top:739.99px;width:53px;text-align:right;font-size:17.5px;color:#1a1a1a">22</div><div class="t" style="left:1029px;top:739.99px;width:107px;text-align:right;font-size:17.5px;color:#1a1a1a">2 549 429,11</div><div class="t" style="left:1140px;top:739.99px;width:107px;text-align:right;font-size:17.5px;color:#1a1a1a">1 003 006,02</div><div class="t" style="left:1251px;top:739.99px;width:90px;text-align:right;font-size:17.5px;color:#1a1a1a">0,36</div><div class="t" style="left:853px;top:770.99px;width:115px;text-align:right;font-size:17.5px;color:#1a1a1a">0</div><div class="t" style="left:972px;top:770.99px;width:53px;text-align:right;font-size:17.5px;color:#1a1a1a">23</div><div class="t" style="left:1029px;top:770.99px;width:107px;text-align:right;font-size:17.5px;color:#1a1a1a">2 549 429,43</div><div class="t" style="left:1140px;top:770.99px;width:107px;text-align:right;font-size:17.5px;color:#1a1a1a">1 003 006,18</div><div class="t" style="left:1251px;top:770.99px;width:90px;text-align:right;font-size:17.5px;color:#1a1a1a">18,35</div><div class="t" style="left:853px;top:801.99px;width:115px;text-align:right;font-size:17.5px;color:#1a1a1a">0</div><div class="t" style="left:972px;top:801.99px;width:53px;text-align:right;font-size:17.5px;color:#1a1a1a">24</div><div class="t" style="left:1029px;top:801.99px;width:107px;text-align:right;font-size:17.5px;color:#1a1a1a">2 549 446,22</div><div class="t" style="left:1140px;top:801.99px;width:107px;text-align:right;font-size:17.5px;color:#1a1a1a">1 003 013,58</div><div class="t" style="left:1251px;top:801.99px;width:90px;text-align:right;font-size:17.5px;color:#1a1a1a">20,1</div>
</body></html>
